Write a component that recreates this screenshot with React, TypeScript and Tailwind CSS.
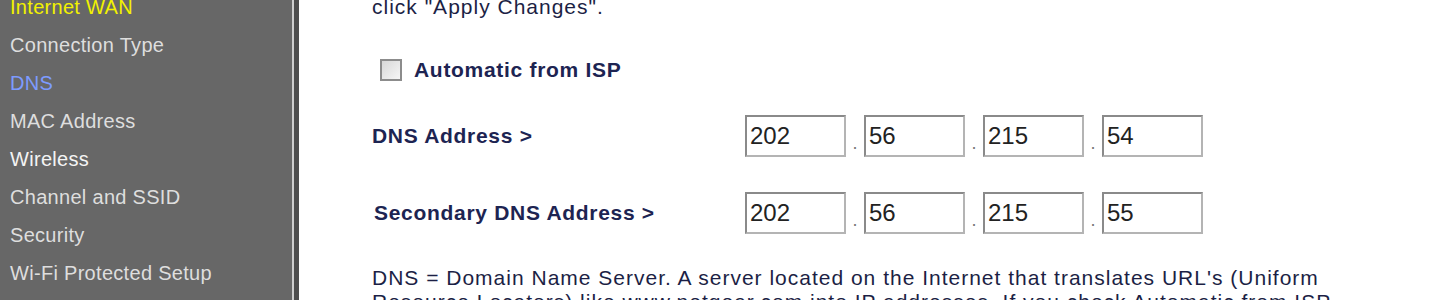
const menu = [
  { label: "Internet WAN", tone: "text-[#f2f200]" },
  { label: "Connection Type", tone: "text-[#dedede]" },
  { label: "DNS", tone: "text-[#7d9bff]" },
  { label: "MAC Address", tone: "text-[#dedede]" },
  { label: "Wireless", tone: "text-[#f4f4f4]" },
  { label: "Channel and SSID", tone: "text-[#dedede]" },
  { label: "Security", tone: "text-[#dedede]" },
  { label: "Wi-Fi Protected Setup", tone: "text-[#dedede]" },
];

function IpField({ value }: { value: string }) {
  return (
    <div className="flex h-[42px] w-[101px] items-center border-2 border-t-[#8a8a8a] border-l-[#8a8a8a] border-b-[#b4b4b4] border-r-[#b4b4b4] bg-white pl-[3px] text-[24px] text-[#222]">
      {value}
    </div>
  );
}

function IpRow({ label, parts, shift }: { label: string; parts: string[]; shift?: boolean }) {
  return (
    <div className="flex items-center">
      <div
        className={
          shift
            ? "w-[373px] pl-[2px] text-[21px] font-bold tracking-[0.7px] text-[#1d2452]"
            : "w-[373px] text-[21px] font-bold tracking-[0.7px] text-[#1d2452]"
        }
      >
        {label}
      </div>
      <div className="flex items-center">
        {parts.map((p, i) => (
          <div key={i} className="flex items-center">
            {i > 0 && <span className="w-[18px] pt-[14px] text-center text-[18px] text-[#777]">.</span>}
            <IpField value={p} />
          </div>
        ))}
      </div>
    </div>
  );
}

export default function App() {
  return (
    <div className="flex h-[300px] w-[1448px] overflow-hidden bg-white font-['Liberation_Sans',Arial,sans-serif]">
      <aside className="flex w-[299px] shrink-0 border-r-[5px] border-r-[#4e4e4e] bg-[#676767]">
        <nav className="-mt-[12px] flex flex-1 flex-col pl-[10px]">
          {menu.map((m) => (
            <div key={m.label} className={`h-[38px] shrink-0 text-[20px] leading-[38px] tracking-[0.3px] ${m.tone}`}>
              {m.label}
            </div>
          ))}
        </nav>
        <div className="w-[2px] bg-[#cfcfcf]" />
      </aside>

      <main className="-mt-[5px] flex flex-1 flex-col pl-[73px] text-[#1c1f45]">
        <p className="h-[24px] shrink-0 text-[21px] leading-[24px] tracking-[1px]">click "Apply Changes".</p>

        <label className="mt-[31px] flex h-[40px] shrink-0 items-center gap-[12px] pl-[8px]">
          <span className="h-[22px] w-[22px] border-2 border-[#8c8c8c] bg-gradient-to-br from-[#d8d8d8] to-[#f6f6f6]" />
          <span className="text-[21px] font-bold tracking-[0.7px] text-[#1d2452]">Automatic from ISP</span>
        </label>

        <div className="mt-[25px] shrink-0">
          <IpRow label="DNS Address >" parts={["202", "56", "215", "54"]} />
        </div>
        <div className="mt-[35px] shrink-0">
          <IpRow label="Secondary DNS Address >" parts={["202", "56", "215", "55"]} shift />
        </div>

        <p className="mt-[32px] w-[1000px] shrink-0 text-[21px] leading-[24px] tracking-[1px]">
          DNS = Domain Name Server. A server located on the Internet that translates URL's (Uniform
          Resource Locators) like www.netgear.com into IP addresses. If you check Automatic from ISP, the
          DNS will be provided by your ISP.
        </p>
      </main>
    </div>
  );
}
